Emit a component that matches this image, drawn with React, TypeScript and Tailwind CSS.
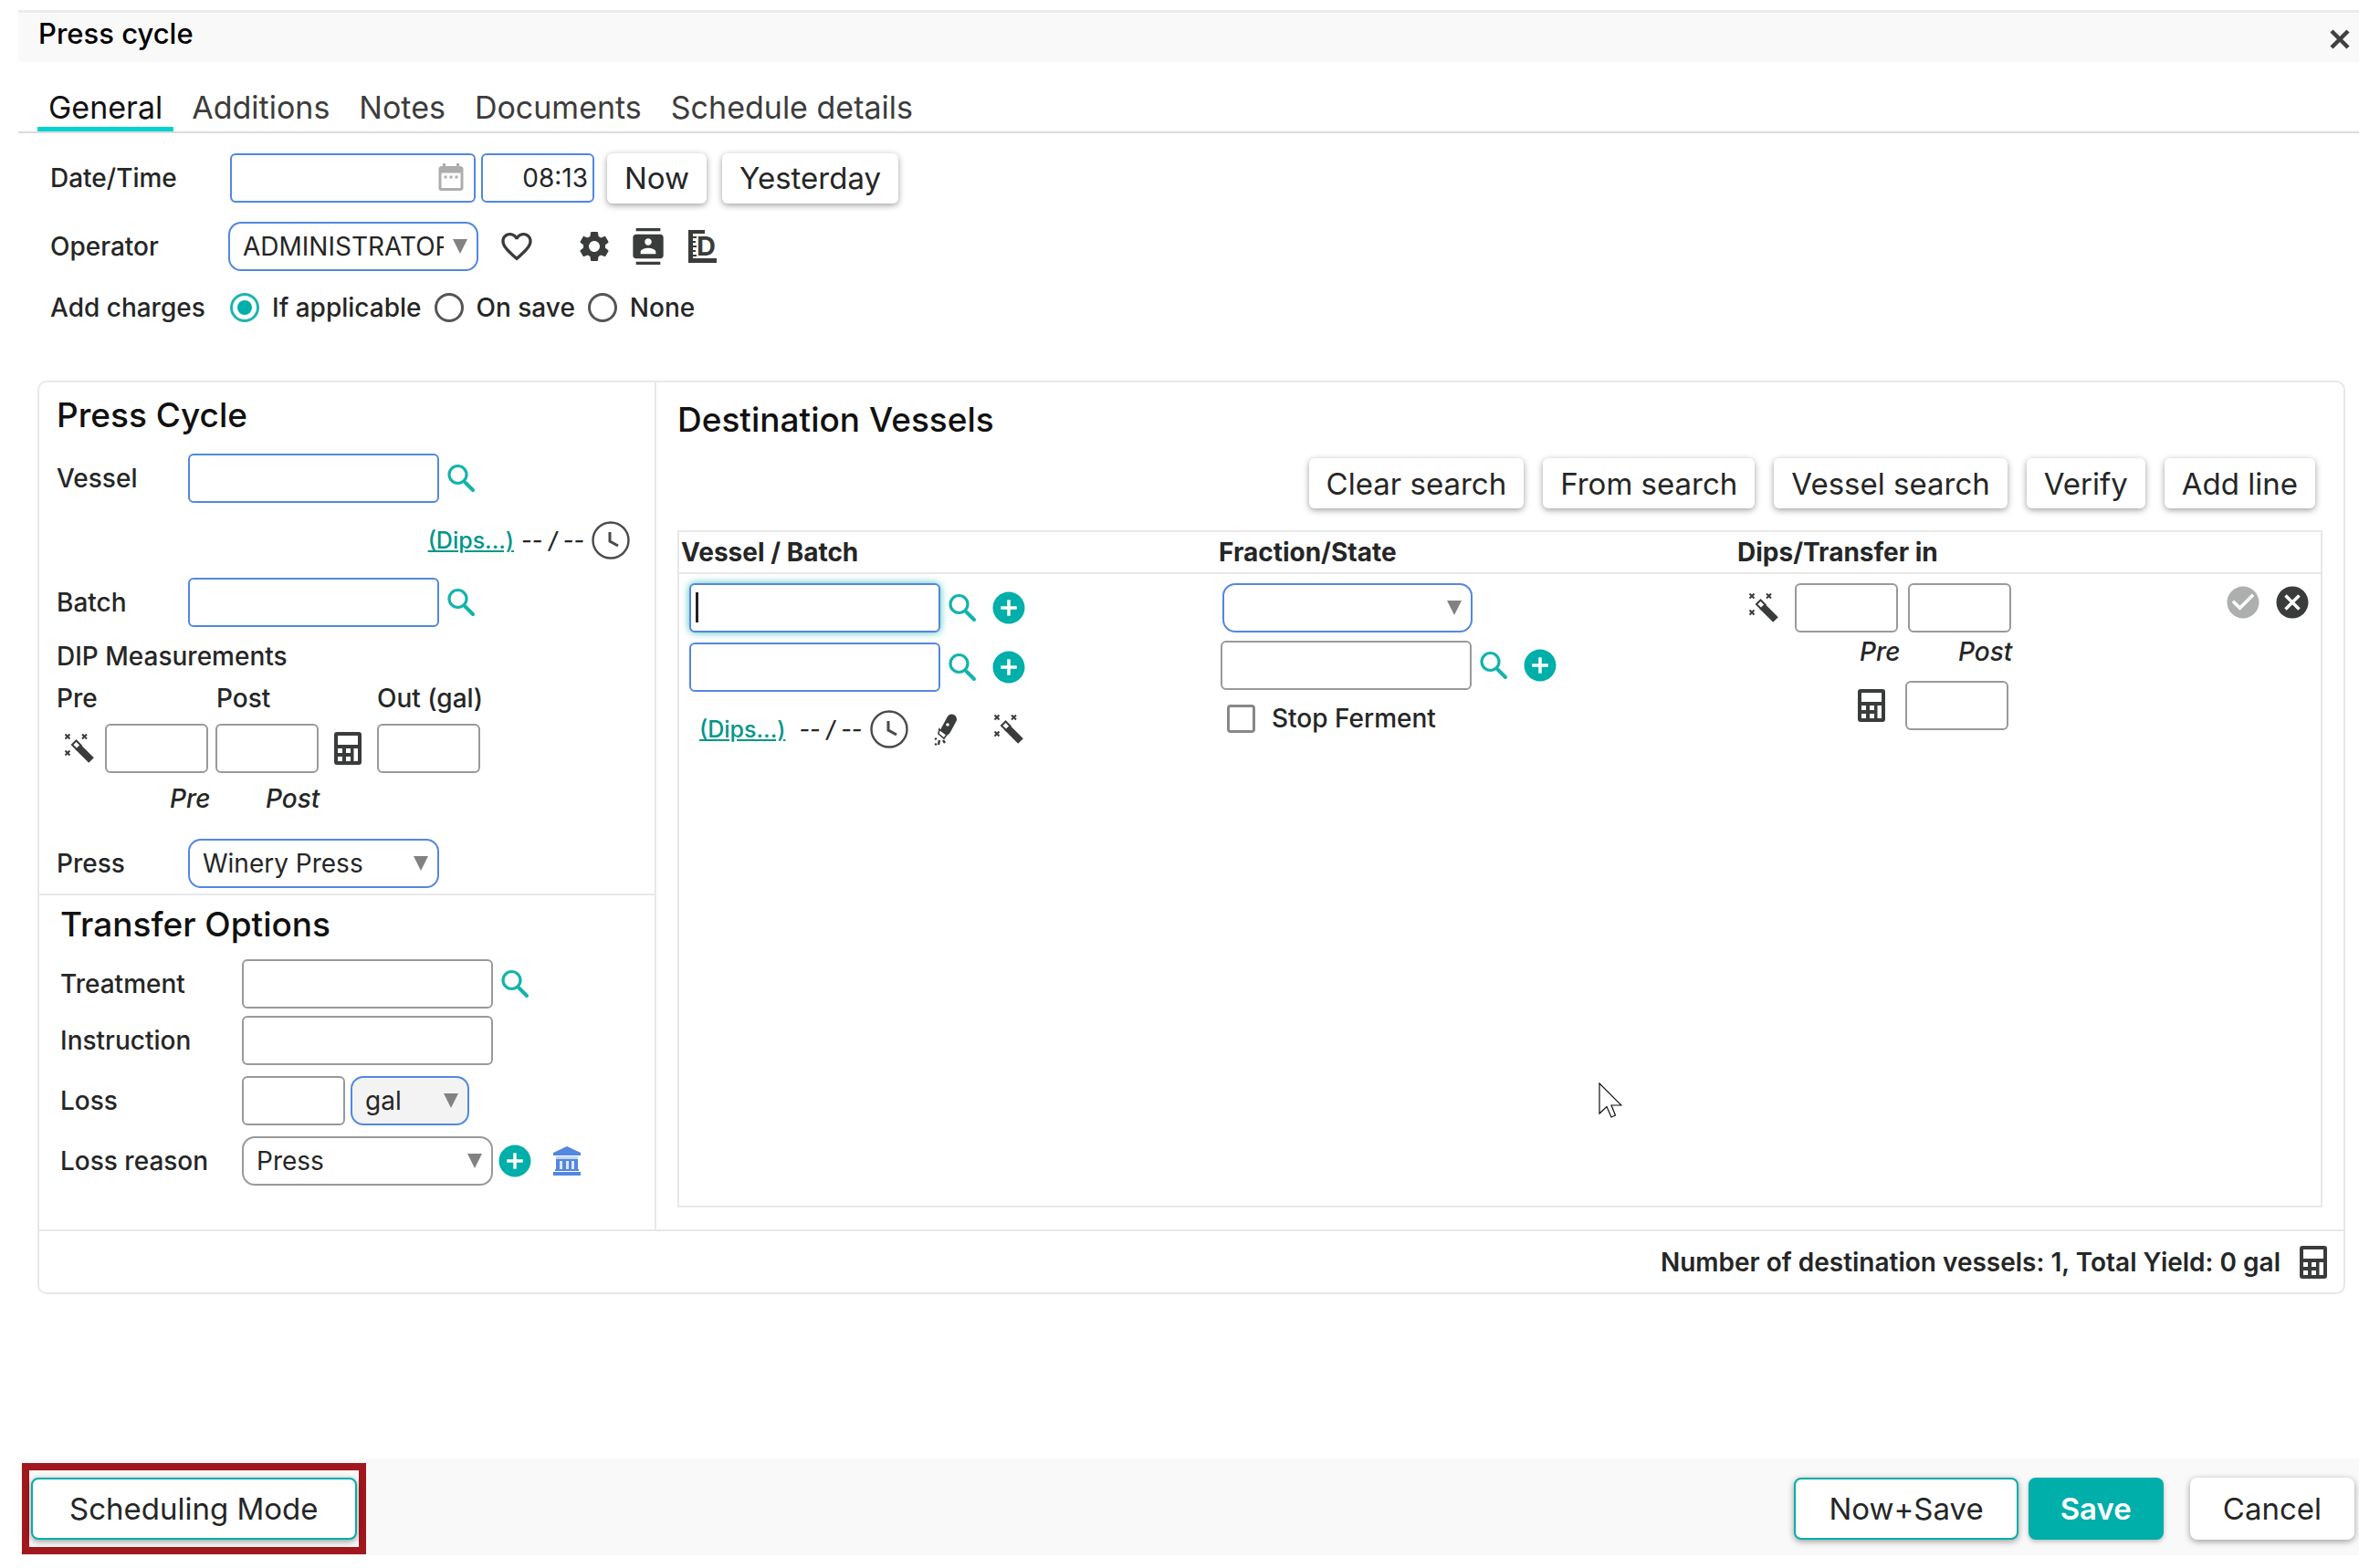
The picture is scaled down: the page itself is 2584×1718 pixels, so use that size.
import { useState } from 'react'
import type { ReactNode } from 'react'
import clsx from 'clsx'
import {
  MdAddCircle,
  MdCancel,
  MdCheckCircle,
  MdContacts,
  MdDateRange,
  MdFavoriteBorder,
  MdSettings,
} from 'react-icons/md'

const tabs = ['General', 'Additions', 'Notes', 'Documents', 'Schedule details']
const chargeOptions = ['If applicable', 'On save', 'None']
const vesselActions = ['Clear search', 'From search', 'Vessel search', 'Verify', 'Add line']

function SearchIcon() {
  return (
    <svg viewBox="0 0 32 32" className="w-8 h-8" fill="none" stroke="#14b3ac">
      <circle cx="12.5" cy="12" r="9.5" strokeWidth="3.2" />
      <path d="M19 19l2.5 2.500" strokeWidth="3" />
      <path d="M21 21l8 8" strokeWidth="4" strokeLinecap="round" />
    </svg>
  )
}

function ClockIcon() {
  return (
    <svg viewBox="0 0 42 42" className="w-[42px] h-[42px]" fill="none" stroke="#4a4a4a">
      <circle cx="21" cy="21" r="19.5" strokeWidth="2.4" />
      <path d="M20 12v10l9 5" strokeWidth="3" />
    </svg>
  )
}

function WandIcon() {
  return (
    <svg viewBox="0 0 34 34" className="w-[34px] h-[34px]" fill="none" stroke="#3a3c3b">
      <path d="M1.5 1.5l5 5m0-5l-5 5M20 1.5l5 5m0-5l-5 5M1.5 19.5l5 5m0-5l-5 5" strokeWidth="2" />
      <path d="M15 15l15 15" strokeWidth="8" />
      <path d="M9 13l4.500-4.500 5 5-4.500 4.500z" strokeWidth="2" fill="#fff" />
    </svg>
  )
}

function CalculatorIcon() {
  return (
    <svg viewBox="0 0 32 38" className="w-8 h-[38px]">
      <rect x="1" y="1" width="30" height="36" rx="3" fill="#3a3c3b" />
      <path
        fill="#fff"
        d="M5 5h22v10H5zM5 19h5v5H5zM14 19h5v5h-5zM5 28h5v5H5zM14 28h5v5h-5zM22.5 19h4.500v14h-4.500z"
      />
    </svg>
  )
}

function DropperIcon() {
  return (
    <svg viewBox="0 0 28 38" className="w-7 h-[38px]" fill="none" stroke="#3a3c3b">
      <path d="M20.5 8L14 20" strokeWidth="11" strokeLinecap="round" />
      <path d="M7 19l8 6-3 4-6-5z" fill="#fff" strokeWidth="1.6" />
      <circle cx="16" cy="14" r="1.8" fill="#fff" stroke="none" />
      <path d="M4 29l-2 1M7 31l-1 5M11 31l2 3M2 35l2 1" strokeWidth="2.4" />
    </svg>
  )
}

function RulerIcon() {
  return (
    <svg viewBox="0 0 34 38" className="w-[34px] h-[38px]">
      <path fill="#3a3c3b" d="M2 1h18v4H7v3h4v2H7v3h3v2H7v3h4v2H7v3h3v2H7v3h4v2H7v2h26v5H2z" />
      <text x="11" y="29" fontFamily="Inter, sans-serif" fontSize="29" fontWeight="700" fill="#3a3c3b">
        D
      </text>
    </svg>
  )
}

function BankIcon() {
  return (
    <svg viewBox="0 0 32 34" className="w-8 h-[34px]" fill="#5387e0">
      <path d="M16 1L31 8v3H1V8z" />
      <path d="M4 12h24v3H4z" opacity="0.35" />
      <path d="M4 15h24v11H4z" opacity="0.2" />
      <path d="M4 15h24v2H4zM4 15h4v11H4zM11 15h4v11h-4zM18 15h3v11h-3zM24 15h4v11h-4zM3 26h26v2H3zM1 29h30v4H1z" />
    </svg>
  )
}

type FieldProps = {
  label: string
  required?: boolean
  width?: string
  className?: string
  autoFocus?: boolean
  id?: string
}

function Field({ label, required, width = 'w-[275px]', className, autoFocus, id }: FieldProps) {
  return (
    <input
      id={id}
      type="text"
      aria-label={id ? undefined : label}
      autoFocus={autoFocus}
      className={clsx(
        'block h-[54px] px-2 rounded-md border-2 bg-white outline-none',
        required ? 'border-[#5387e0]' : 'border-[#999]',
        width,
        className
      )}
    />
  )
}

type SelectBoxProps = {
  id?: string
  label: string
  options: string[]
  required?: boolean
  className?: string
}

function SelectBox({ id, label, options, required, className }: SelectBoxProps) {
  return (
    <div className="relative w-fit">
      <select
        id={id}
        aria-label={id ? undefined : label}
        className={clsx(
          'block h-[54px] pl-[14px] pr-9 rounded-[14px] border-2 appearance-none outline-none overflow-hidden font-normal',
          required ? 'border-[#5387e0]' : 'border-[#999]',
          className
        )}
      >
        {options.map((option) => (
          <option key={option}>{option}</option>
        ))}
      </select>
      <svg viewBox="0 0 16 16" className="absolute right-3 top-[19px] w-4 h-4 pointer-events-none">
        <path d="M0 0h16L8 16z" fill="#828282" />
      </svg>
    </div>
  )
}

function IconButton({ label, className, children }: { label: string; className?: string; children: ReactNode }) {
  return (
    <button type="button" aria-label={label} className={clsx('flex items-center justify-center', className)}>
      {children}
    </button>
  )
}

function SearchButton({ label }: { label: string }) {
  return (
    <IconButton label={label} className="ml-2">
      <SearchIcon />
    </IconButton>
  )
}

function AddButton({ label, className }: { label: string; className?: string }) {
  return (
    <IconButton label={label} className={clsx('text-[#00aeaa]', className)}>
      <MdAddCircle size={42} />
    </IconButton>
  )
}

function ActionButton({ children }: { children: ReactNode }) {
  return (
    <button
      type="button"
      className="h-[55px] px-[19px] rounded-md bg-white text-[33px] shadow-[0_2px_7px_rgba(0,0,0,0.38)]"
    >
      {children}
    </button>
  )
}

export default function App() {
  const [activeTab, setActiveTab] = useState('General')
  const [charges, setCharges] = useState('If applicable')

  return (
    <div className="min-h-screen flex flex-col bg-white pl-5 pt-[11px] pb-[14px] font-['Inter',sans-serif] text-[28px] leading-8 font-medium text-[#252626]">
      {/* Title bar */}
      <header className="flex items-center justify-between h-[57px] pl-[22px] pr-2 bg-[#f9f9f9] border-t-[3px] border-[#ebebeb]">
        <h1 className="text-[31px] leading-9 pb-2 text-black">Press cycle</h1>
        <IconButton label="Close" className="mt-1">
          <svg viewBox="0 0 26 26" className="w-[26px] h-[26px]" stroke="#3f4140" strokeWidth="4.500">
            <path d="M4 4l18 18M22 4L4 22" />
          </svg>
        </IconButton>
      </header>

      {/* Tabs */}
      <nav className="flex items-end h-[78px] pl-[21px] gap-2 border-b-2 border-[#dcdcdc] text-[34px] font-normal">
        {tabs.map((tab) => (
          <button
            key={tab}
            type="button"
            onClick={() => setActiveTab(tab)}
            className={clsx(
              'h-[54px] px-3 pt-[6px] border-b-[5px]',
              activeTab === tab ? 'border-[#00d3d0] text-[#111]' : 'border-transparent text-[#3c3c3c]'
            )}
          >
            {tab}
          </button>
        ))}
      </nav>

      {/* General details */}
      <section className="pl-[35px] pt-[21px]">
        <div className="flex items-center h-14">
          <label htmlFor="date" className="w-[197px]">
            Date/Time
          </label>
          <div className="relative">
            <Field id="date" label="Date" required width="w-[269px]" />
            <MdDateRange size={36} className="absolute right-[9px] top-2 text-[#adadad]" />
          </div>
          <input
            type="text"
            aria-label="Time"
            defaultValue="08:13"
            className="ml-[6px] w-[124px] h-[54px] pr-[5px] rounded-md border-2 border-[#5387e0] text-right font-normal outline-none"
          />
          <div className="flex gap-[17px] ml-[14px] font-normal">
            <ActionButton>Now</ActionButton>
            <ActionButton>Yesterday</ActionButton>
          </div>
        </div>

        <div className="flex items-center mt-5 text-[#3a3c3b]">
          <label htmlFor="operator" className="w-[195px] text-[#252626]">
            Operator
          </label>
          <SelectBox
            id="operator"
            label="Operator"
            required
            options={['ADMINISTRATOR']}
            className="w-[274px] text-[#252626]"
          />
          <IconButton label="Favorite" className="ml-[22px]">
            <MdFavoriteBorder size={40} />
          </IconButton>
          <IconButton label="Settings" className="ml-[45px]">
            <MdSettings size={40} />
          </IconButton>
          <IconButton label="Contacts" className="ml-[19px]">
            <MdContacts size={40} />
          </IconButton>
          <IconButton label="Dip chart" className="ml-[22px]">
            <RulerIcon />
          </IconButton>
        </div>

        <fieldset className="flex items-center h-8 mt-6">
          <legend className="float-left w-[197px]">Add charges</legend>
          {chargeOptions.map((option) => (
            <label key={option} className="flex items-center gap-[14px] mr-[14px]">
              <input
                type="radio"
                name="charges"
                checked={charges === option}
                onChange={() => setCharges(option)}
                className="w-8 h-8 p-[5px] rounded-full border-[3px] border-[#555] bg-clip-content appearance-none checked:border-[#1bb5b0] checked:bg-[#00aeaa]"
              />
              {option}
            </label>
          ))}
        </fieldset>
      </section>

      <main className="ml-[21px] mr-[15px] mt-16 border-2 border-[#e8e8e8] rounded-[10px]">
        <div className="flex">
          <div className="w-[676px] shrink-0 border-r-2 border-[#e8e8e8]">
            {/* Press cycle */}
            <section className="pl-[19px] pt-3 pb-[6px] border-b-2 border-[#e8e8e8]">
              <h2 className="text-[37px] leading-[48px] text-[#111]">Press Cycle</h2>
              <div className="flex items-center mt-[18px]">
                <label htmlFor="vessel" className="w-36">
                  Vessel
                </label>
                <Field id="vessel" label="Vessel" required />
                <SearchButton label="Search vessel" />
              </div>
              <div className="flex items-center justify-end mt-5 pr-[27px] text-[25px]">
                <a href="#dips" className="text-[#009688] underline">
                  (Dips...)
                </a>
                <span className="mx-2 italic">-- / --</span>
                <IconButton label="History">
                  <ClockIcon />
                </IconButton>
              </div>
              <div className="flex items-center mt-5">
                <label htmlFor="batch" className="w-36">
                  Batch
                </label>
                <Field id="batch" label="Batch" required />
                <SearchButton label="Search batch" />
              </div>
              <h3 className="mt-4">DIP Measurements</h3>
              <div className="flex mt-[14px]">
                <span className="w-[175px]">Pre</span>
                <span className="w-44">Post</span>
                <span>Out (gal)</span>
              </div>
              <div className="flex items-center mt-3">
                <IconButton label="Calculate dips" className="w-[53px] pr-1">
                  <WandIcon />
                </IconButton>
                <Field label="Pre" width="w-[113px]" />
                <Field label="Post" width="w-[113px]" className="ml-2" />
                <IconButton label="Calculator" className="w-16">
                  <CalculatorIcon />
                </IconButton>
                <Field label="Out (gal)" width="w-[113px]" />
              </div>
              <div className="flex mt-3 pl-[124px] italic">
                <span className="w-[105px]">Pre</span>
                <span>Post</span>
              </div>
              <div className="flex items-center mt-7">
                <label htmlFor="press" className="w-36">
                  Press
                </label>
                <SelectBox id="press" label="Press" required options={['Winery Press']} className="w-[275px]" />
              </div>
            </section>

            {/* Transfer options */}
            <section className="pl-[23px] pt-2 pb-12">
              <h2 className="text-[37px] leading-[48px] text-[#111]">Transfer Options</h2>
              <div className="flex items-center mt-[14px]">
                <label htmlFor="treatment" className="w-[199px]">
                  Treatment
                </label>
                <Field id="treatment" label="Treatment" />
                <SearchButton label="Search treatment" />
              </div>
              <div className="flex items-center mt-2">
                <label htmlFor="instruction" className="w-[199px]">
                  Instruction
                </label>
                <Field id="instruction" label="Instruction" />
              </div>
              <div className="flex items-center mt-3">
                <label htmlFor="loss" className="w-[199px]">
                  Loss
                </label>
                <Field id="loss" label="Loss" width="w-[113px]" />
                <div className="ml-[6px]">
                  <SelectBox label="Loss unit" required options={['gal']} className="w-[130px] bg-[#f3f3f3]" />
                </div>
              </div>
              <div className="flex items-center mt-3">
                <label htmlFor="loss-reason" className="w-[199px]">
                  Loss reason
                </label>
                <SelectBox id="loss-reason" label="Loss reason" options={['Press']} className="w-[275px]" />
                <AddButton label="Add loss reason" className="ml-[3px]" />
                <IconButton label="Bank" className="ml-5">
                  <BankIcon />
                </IconButton>
              </div>
            </section>
          </div>

          {/* Destination vessels */}
          <section className="flex flex-col flex-1 px-[23px] pt-[17px] pb-6">
            <h2 className="text-[37px] leading-[48px] text-[#111]">Destination Vessels</h2>
            <div className="flex justify-end gap-[21px] mt-[18px] pr-2 font-normal">
              {vesselActions.map((action) => (
                <ActionButton key={action}>{action}</ActionButton>
              ))}
            </div>
            <div className="relative flex-1 mt-6 border-2 border-[#e8e8e8]">
              <table className="w-full table-fixed">
                <thead>
                  <tr className="h-[45px] border-b-2 border-[#e8e8e8] text-left">
                    <th className="w-[589px] pl-[2px] font-bold">Vessel / Batch</th>
                    <th className="w-[568px] pl-[2px] font-bold">Fraction/State</th>
                    <th className="pl-[2px] font-bold">Dips/Transfer in</th>
                    <th className="w-32" aria-label="Line actions" />
                  </tr>
                </thead>
                <tbody>
                  <tr className="align-top">
                    <td className="pl-[11px] pt-[10px]">
                      <div className="flex items-center">
                        <div className="relative">
                          <Field
                            label="Destination vessel"
                            required
                            autoFocus
                            className="caret-transparent shadow-[0_0_9px_rgba(0,174,170,0.75)]"
                          />
                          {/* Text cursor */}
                          <span className="absolute left-[7px] top-[10px] w-[3px] h-[33px] bg-[#222] pointer-events-none" />
                        </div>
                        <SearchButton label="Search destination vessel" />
                        <AddButton label="Add vessel" className="ml-[14px]" />
                      </div>
                      <div className="flex items-center mt-[11px]">
                        <Field label="Destination batch" required />
                        <SearchButton label="Search destination batch" />
                        <AddButton label="Add batch" className="ml-[14px]" />
                      </div>
                      <div className="flex items-center mt-5 pl-[11px] text-[25px]">
                        <a href="#destination-dips" className="text-[#009688] underline">
                          (Dips...)
                        </a>
                        <span className="ml-[15px] mr-[9px] italic">-- / --</span>
                        <IconButton label="History">
                          <ClockIcon />
                        </IconButton>
                        <IconButton label="Additive" className="ml-[27px]">
                          <DropperIcon />
                        </IconButton>
                        <IconButton label="Fill values" className="ml-[38px]">
                          <WandIcon />
                        </IconButton>
                      </div>
                    </td>
                    <td className="pl-1 pt-[10px]">
                      <div className="pl-[2px]">
                        <SelectBox label="Fraction" required options={['']} className="w-[274px]" />
                      </div>
                      <div className="flex items-center mt-[9px]">
                        <Field label="State" />
                        <SearchButton label="Search state" />
                        <AddButton label="Add state" className="ml-[14px]" />
                      </div>
                      <label className="inline-flex items-center gap-[18px] mt-[15px] pl-[7px]">
                        <input
                          type="checkbox"
                          className="w-[31px] h-[31px] rounded-[4px] border-[3px] border-[#888] appearance-none checked:bg-[#00aeaa]"
                        />
                        Stop Ferment
                      </label>
                    </td>
                    <td className="pt-[10px]">
                      <div className="flex items-center">
                        <IconButton label="Calculate transfer" className="w-[65px] pr-1">
                          <WandIcon />
                        </IconButton>
                        <Field label="Transfer pre" width="w-[113px]" />
                        <Field label="Transfer post" width="w-[113px]" className="ml-[11px]" />
                      </div>
                      <div className="flex mt-[5px] pl-[136px] italic">
                        <span className="w-[108px]">Pre</span>
                        <span>Post</span>
                      </div>
                      <div className="flex items-center mt-4 pl-[133px]">
                        <IconButton label="Transfer calculator" className="mr-[21px]">
                          <CalculatorIcon />
                        </IconButton>
                        <Field label="Transfer volume" width="w-[113px]" />
                      </div>
                    </td>
                    <td className="pt-[10px] pr-[10px]">
                      <div className="flex justify-end gap-3">
                        <IconButton label="Confirm line" className="text-[#adafae]">
                          <MdCheckCircle size={42} />
                        </IconButton>
                        <IconButton label="Remove line" className="text-[#3a3c3b]">
                          <MdCancel size={42} />
                        </IconButton>
                      </div>
                    </td>
                  </tr>
                </tbody>
              </table>
              {/* Mouse pointer */}
              <svg
                viewBox="0 0 26 40"
                className="absolute left-[56%] top-[603px] w-[26px] h-10"
                fill="#fff"
                stroke="#111"
                strokeWidth="1.200"
              >
                <path d="M1 1v33l8-7.500 5 11.500 4.500-2-4.500-11h11z" />
              </svg>
            </div>
          </section>
        </div>

        <div className="flex items-center justify-end h-[69px] pr-[17px] gap-5 border-t-2 border-[#e8e8e8] font-semibold">
          <span>Number of destination vessels: 1, Total Yield: 0 gal</span>
          <IconButton label="Yield calculator">
            <CalculatorIcon />
          </IconButton>
        </div>
      </main>

      {/* Footer actions */}
      <footer className="flex items-center mt-auto h-[106px] pl-1 pr-[5px] pt-1 bg-[#f9f9f9] text-[33px] font-normal">
        <div className="mr-auto px-[2px] py-2 border-8 border-[#a1171e]">
          <button
            type="button"
            className="block h-[68px] px-10 rounded-lg border-2 border-[#00aeaa] bg-white shadow-[0_2px_7px_rgba(0,0,0,0.38)]"
          >
            Scheduling Mode
          </button>
        </div>
        <button
          type="button"
          className="h-[68px] px-9 rounded-lg border-2 border-[#00aeaa] bg-white shadow-[0_2px_7px_rgba(0,0,0,0.38)]"
        >
          Now+Save
        </button>
        <button
          type="button"
          className="h-[68px] ml-[11px] px-[35px] rounded-lg bg-[#00aeaa] text-white font-semibold shadow-[0_2px_5px_rgba(0,0,0,0.25)]"
        >
          Save
        </button>
        <button
          type="button"
          className="h-[68px] ml-[29px] px-9 rounded-lg bg-white shadow-[0_2px_7px_rgba(0,0,0,0.38)]"
        >
          Cancel
        </button>
      </footer>
    </div>
  )
}
